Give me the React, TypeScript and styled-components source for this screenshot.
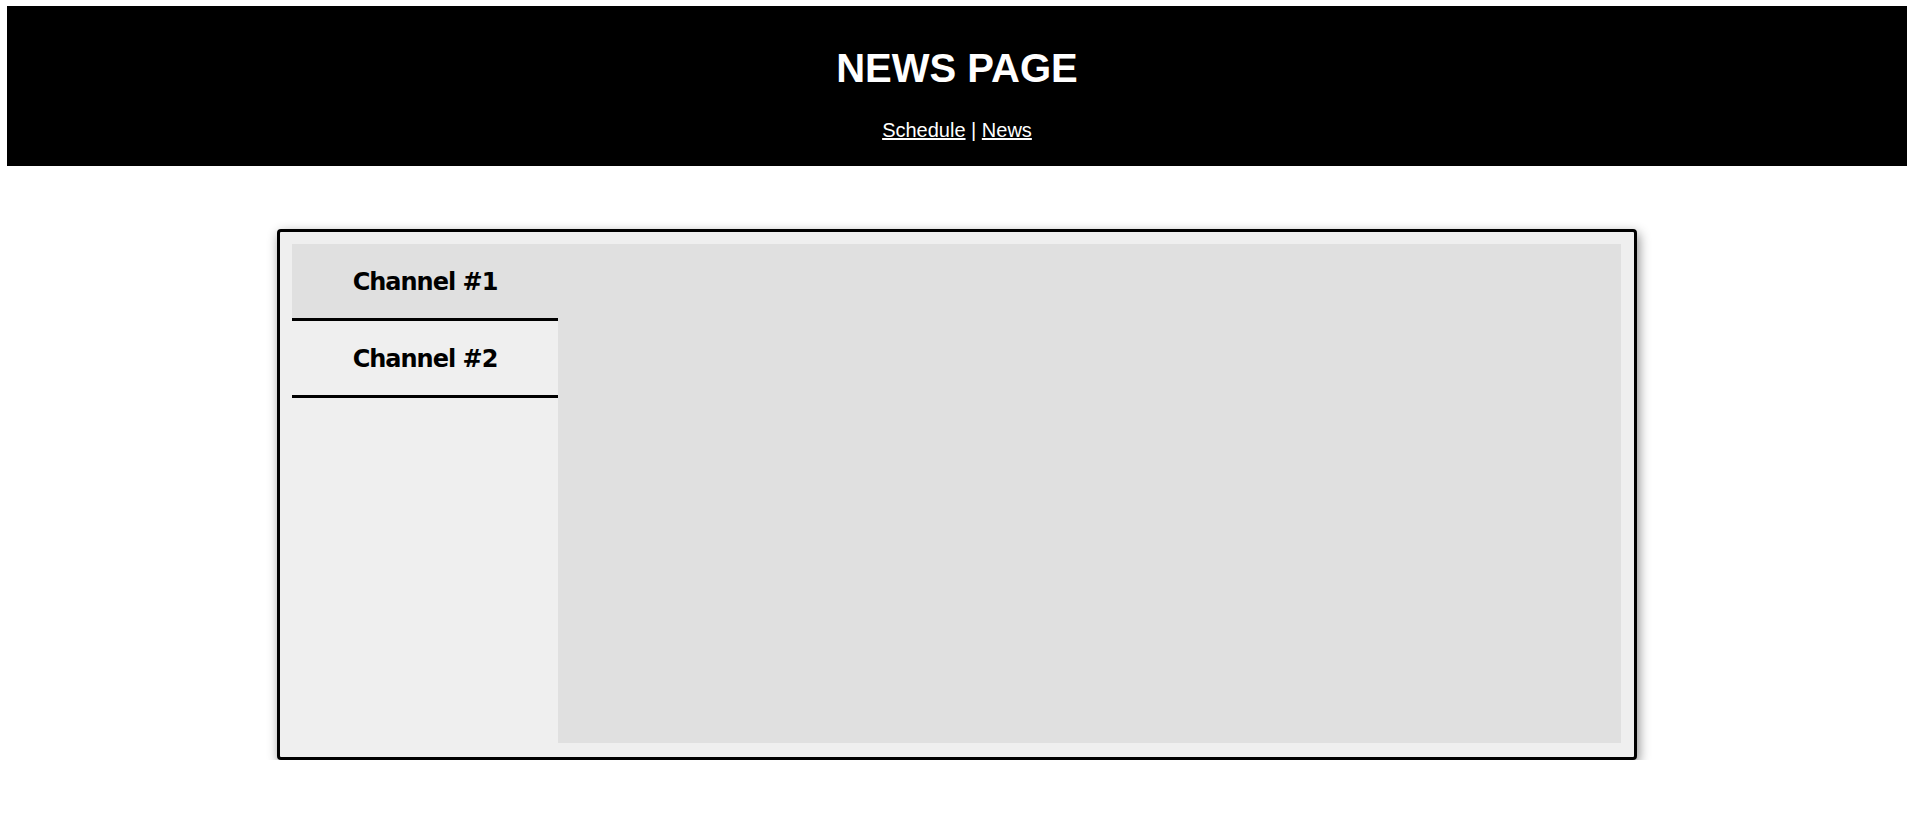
import React from "react";
import styled, { createGlobalStyle } from "styled-components";

const GlobalStyle = createGlobalStyle`
  html, body { margin: 0; padding: 0; background: #ffffff; }
  body { font-family: "Liberation Sans", Arial, sans-serif; }
`;

const Header = styled.header`
  margin: 6px 10px 0 7px;
  height: 160px;
  box-sizing: border-box;
  padding-top: 40px;
  background: #000000;
  color: #ffffff;
  display: flex;
  flex-direction: column;
  align-items: center;
`;

const Title = styled.h1`
  margin: 0 0 28px 0;
  font-family: "Liberation Sans", Arial, sans-serif;
  font-weight: bold;
  font-size: 40px;
  line-height: 45px;
`;

const Nav = styled.nav`
  font-family: "Liberation Sans", Arial, sans-serif;
  font-size: 20px;
  line-height: 23px;
  color: #ffffff;
`;

const NavLink = styled.a`
  color: #ffffff;
  text-decoration: underline;
`;

const Card = styled.section`
  width: 1360px;
  height: 531px;
  box-sizing: border-box;
  margin: 63px 0 0 277px;
  border: 3px solid #000000;
  border-radius: 4px;
  padding: 12px 13px 14px 12px;
  background: #efefef;
  box-shadow: 2px 4px 12px rgba(0, 0, 0, 0.45);
  display: flex;
`;

const Sidebar = styled.div`
  width: 266px;
  flex: 0 0 266px;
  display: flex;
  flex-direction: column;
  background: #efefef;
`;

const Tab = styled.div<{ $active?: boolean }>`
  height: 77px;
  box-sizing: border-box;
  padding-top: 2px;
  display: flex;
  align-items: center;
  justify-content: center;
  background: ${(p) => (p.$active ? "#e0e0e0" : "#efefef")};
  border-bottom: 3px solid #000000;
  font-family: "DejaVu Sans", Verdana, sans-serif;
  font-weight: bold;
  font-size: 24px;
  letter-spacing: -1px;
  color: #000000;
  cursor: pointer;
`;

const Content = styled.div`
  flex: 1;
  background: #e0e0e0;
`;

export default function App() {
  return (
    <>
      <GlobalStyle />
      <Header>
        <Title>NEWS PAGE</Title>
        <Nav>
          <NavLink href="#">Schedule</NavLink> | <NavLink href="#">News</NavLink>
        </Nav>
      </Header>
      <Card>
        <Sidebar>
          <Tab $active>Channel #1</Tab>
          <Tab>Channel #2</Tab>
        </Sidebar>
        <Content />
      </Card>
    </>
  );
}
